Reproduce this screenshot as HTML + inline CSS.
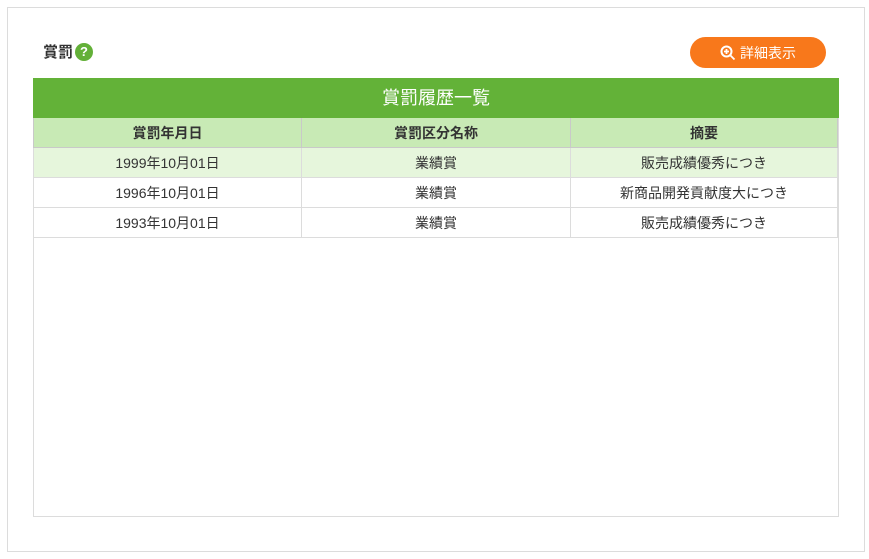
<!DOCTYPE html>
<html><head><meta charset="utf-8"><style>
body{margin:0;width:869px;height:559px;background:#fff;font-family:"Liberation Sans","Noto Sans CJK JP",sans-serif;position:relative;overflow:hidden}
.outer{position:absolute;left:7px;top:7px;width:856px;height:543px;border:1px solid #dcdcdc}
.title{position:absolute;left:43px;top:41px;font-size:15px;font-weight:bold;color:#333;display:flex;align-items:center}
.q{display:inline-block;width:18px;height:18px;border-radius:50%;background:#63b038;color:#fff;font-size:13px;text-align:center;line-height:18px;margin-left:2px}
.btn{position:absolute;left:690px;top:37px;width:136px;height:31px;border-radius:16px;background:#f8781b;color:#fff;font-size:14px;display:flex;align-items:center;justify-content:center}
.box{position:absolute;left:33px;top:78px;width:804px;height:438px;border:1px solid #dcdcdc;border-top:none}
.hd{height:40px;background:#63b238;color:#fff;font-size:18px;text-align:center;line-height:40px;margin:0 -1px}
table{border-collapse:collapse;width:805px;margin-left:-1px;font-size:14px;color:#333}
td,th{border:1px solid #dcdcdc;text-align:center;height:29px;padding:0}
th{background:#c8eab5;font-weight:bold;border-color:#c9c9c9;border-top:none}
tr.a td{background:#e6f6dc}
</style></head><body>
<div class="outer"></div>
<div class="title">賞罰<span class="q">?</span></div>
<div class="btn"><svg width="16" height="16" viewBox="0 0 16 16" style="margin-right:4px"><circle cx="6.5" cy="6.5" r="5" fill="none" stroke="#fff" stroke-width="2"/><path d="M10 10l4.5 4.5M6.5 4v5M4 6.5h5" stroke="#fff" stroke-width="1.8"/></svg>詳細表示</div>
<div class="box">
<div class="hd">賞罰履歴一覧</div>
<table>
<tr><th style="width:267px">賞罰年月日</th><th style="width:268px">賞罰区分名称</th><th>摘要</th></tr>
<tr class="a"><td>1999年10月01日</td><td>業績賞</td><td>販売成績優秀につき</td></tr>
<tr><td>1996年10月01日</td><td>業績賞</td><td>新商品開発貢献度大につき</td></tr>
<tr><td>1993年10月01日</td><td>業績賞</td><td>販売成績優秀につき</td></tr>
</table>
</div>
</body></html>
